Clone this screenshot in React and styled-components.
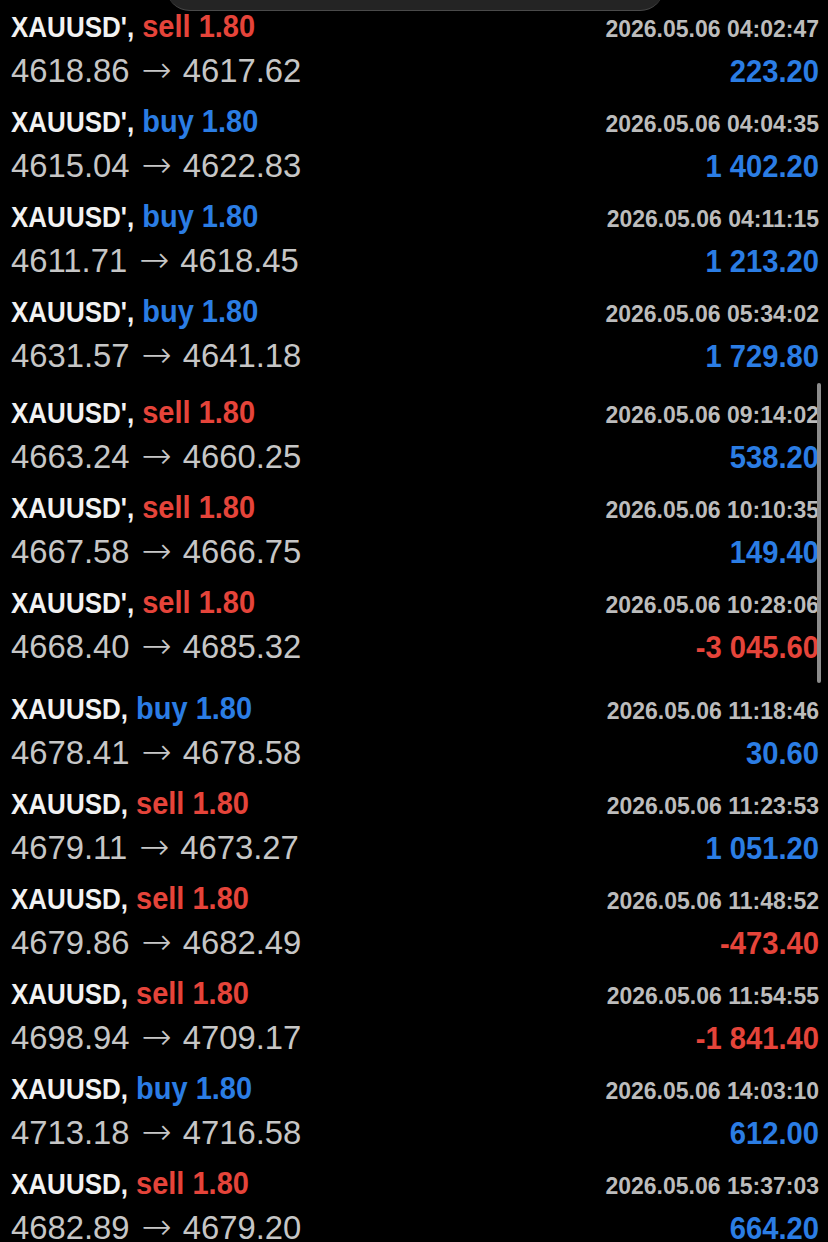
import styled, { createGlobalStyle } from "styled-components";

const GlobalStyle = createGlobalStyle`
  html, body {
    margin: 0;
    padding: 0;
    background: #000;
    overflow: hidden;
  }
  body {
    font-family: "Liberation Sans", Arial, sans-serif;
  }
`;

const trades = [
  { sym: "XAUUSD'", dir: "sell", open: "4618.86", close: "4617.62", time: "2026.05.06 04:02:47", profit: "223.20" },
  { sym: "XAUUSD'", dir: "buy", open: "4615.04", close: "4622.83", time: "2026.05.06 04:04:35", profit: "1 402.20" },
  { sym: "XAUUSD'", dir: "buy", open: "4611.71", close: "4618.45", time: "2026.05.06 04:11:15", profit: "1 213.20" },
  { sym: "XAUUSD'", dir: "buy", open: "4631.57", close: "4641.18", time: "2026.05.06 05:34:02", profit: "1 729.80" },
  { sym: "XAUUSD'", dir: "sell", open: "4663.24", close: "4660.25", time: "2026.05.06 09:14:02", profit: "538.20", gap: 6 },
  { sym: "XAUUSD'", dir: "sell", open: "4667.58", close: "4666.75", time: "2026.05.06 10:10:35", profit: "149.40" },
  { sym: "XAUUSD'", dir: "sell", open: "4668.40", close: "4685.32", time: "2026.05.06 10:28:06", profit: "-3 045.60" },
  { sym: "XAUUSD", dir: "buy", open: "4678.41", close: "4678.58", time: "2026.05.06 11:18:46", profit: "30.60", gap: 11 },
  { sym: "XAUUSD", dir: "sell", open: "4679.11", close: "4673.27", time: "2026.05.06 11:23:53", profit: "1 051.20" },
  { sym: "XAUUSD", dir: "sell", open: "4679.86", close: "4682.49", time: "2026.05.06 11:48:52", profit: "-473.40" },
  { sym: "XAUUSD", dir: "sell", open: "4698.94", close: "4709.17", time: "2026.05.06 11:54:55", profit: "-1 841.40" },
  { sym: "XAUUSD", dir: "buy", open: "4713.18", close: "4716.58", time: "2026.05.06 14:03:10", profit: "612.00" },
  { sym: "XAUUSD", dir: "sell", open: "4682.89", close: "4679.20", time: "2026.05.06 15:37:03", profit: "664.20" },
];

const BLUE = "#2b7de4";
const RED = "#e5443a";

const Screen = styled.div`
  position: relative;
  height: 1242px;
  overflow: hidden;
  background: #000;
  padding: 0 9px 0 11px;
`;

// bottom edge of a sheet sliding over the list
const Sheet = styled.div`
  position: absolute;
  top: -30px;
  left: 166px;
  width: 498px;
  height: 40px;
  background: #242424;
  border-bottom: 1px solid #4a4a4a;
  border-radius: 0 0 24px 24px;
`;

const ScrollThumb = styled.div`
  position: absolute;
  top: 383px;
  right: 7px;
  width: 4px;
  height: 300px;
  border-radius: 2px;
  background: #8c8c8c;
`;

const List = styled.div`
  display: flex;
  flex-direction: column;
`;

const Row = styled.div`
  height: 95px;
  box-sizing: border-box;
  padding-top: 13px;
  margin-top: ${(p) => p.$gap || 0}px;
  display: flex;
  flex-direction: column;
`;

const Line = styled.div`
  display: flex;
  justify-content: space-between;
  align-items: baseline;
`;

const PriceLine = styled(Line)`
  margin-top: 13px;
`;

const Left = styled.div`
  display: flex;
  align-items: baseline;
`;

const Stretched = styled.span`
  line-height: 1;
  font-weight: 700;
  white-space: pre;
  transform-origin: 0 0.8465em;
`;

const Symbol = styled(Stretched)`
  font-size: 26px;
  color: #f2f2f2;
  transform: scaleY(1.16);
`;

const Side = styled(Stretched)`
  font-size: 29px;
  margin-left: 8px;
  color: ${(p) => (p.$dir === "buy" ? BLUE : RED)};
  transform: scaleY(1.05);
`;

const Time = styled(Stretched)`
  font-size: 23px;
  color: #bcbcbc;
  transform: scaleY(1.07);
`;

const Prices = styled.span`
  display: flex;
  align-items: baseline;
  line-height: 1;
  font-size: 32.8px;
  font-weight: 400;
  color: #c6c6c6;
  white-space: pre;
`;

const Arrow = styled.span`
  font-family: "DejaVu Sans", sans-serif;
  font-size: 36px;
  line-height: 0.8;
  font-weight: 200;
  margin: 0 11px 0 12px;
  color: #c6c6c6;
`;

const Profit = styled(Stretched)`
  font-size: 29.2px;
  color: ${(p) => (p.$loss ? RED : BLUE)};
  transform: scaleY(1.086);
`;

function TradeRow({ t }) {
  return (
    <Row $gap={t.gap}>
      <Line>
        <Left>
          <Symbol>{t.sym},</Symbol>
          <Side $dir={t.dir}>{t.dir} 1.80</Side>
        </Left>
        <Time>{t.time}</Time>
      </Line>
      <PriceLine>
        <Prices>
          {t.open}
          <Arrow>→</Arrow>
          {t.close}
        </Prices>
        <Profit $loss={t.profit.startsWith("-")}>{t.profit}</Profit>
      </PriceLine>
    </Row>
  );
}

export default function App() {
  return (
    <>
      <GlobalStyle />
      <Screen>
        <List>
          {trades.map((t, i) => (
            <TradeRow key={i} t={t} />
          ))}
        </List>
        <ScrollThumb />
        <Sheet />
      </Screen>
    </>
  );
}
